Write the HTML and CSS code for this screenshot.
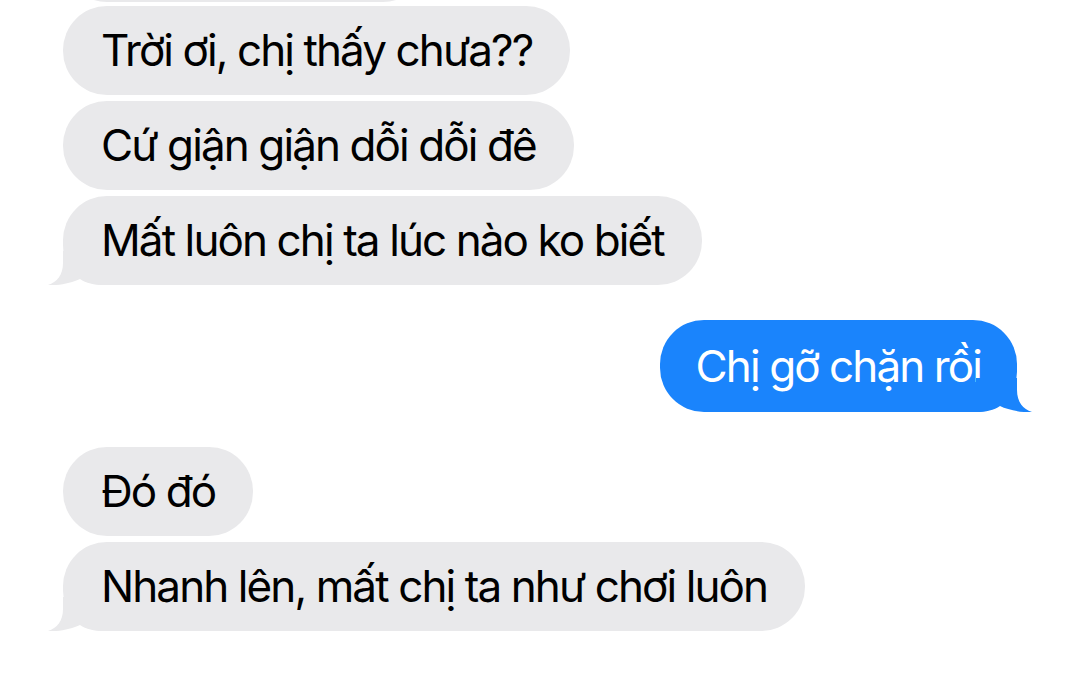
FILE: index.html
```html
<!DOCTYPE html>
<html lang="vi">
<head>
  <meta charset="UTF-8">
  <meta name="viewport" content="width=device-width, initial-scale=1.0">
  <title>Tin nhắn</title>
  <link rel="stylesheet" href="styles.css">
</head>
<body>
  <div class="thread">
    <div class="group">
      <div class="bubble them clipped"></div>
      <div class="bubble them">Trời ơi, chị thấy chưa??</div>
      <div class="bubble them">Cứ giận giận dỗi dỗi đê</div>
      <div class="bubble them has-tail">Mất luôn chị ta lúc nào ko biết
        <svg class="tail" width="56" height="34" viewBox="0 0 56 34"><path d="M15 0 V12 C15 24 9 31 0 34 C9 35 24 32 32 28 C38 32 46 34 56 34 V0 Z"/></svg>
      </div>
    </div>

    <div class="group">
      <div class="bubble me has-tail">Chị gỡ chặn rồi
        <svg class="tail" width="56" height="34" viewBox="0 0 56 34"><path d="M15 0 V12 C15 24 9 31 0 34 C9 35 24 32 32 28 C38 32 46 34 56 34 V0 Z"/></svg>
      </div>
    </div>

    <div class="group">
      <div class="bubble them">Đó đó</div>
      <div class="bubble them has-tail">Nhanh lên, mất chị ta như chơi luôn
        <svg class="tail" width="56" height="34" viewBox="0 0 56 34"><path d="M15 0 V12 C15 24 9 31 0 34 C9 35 24 32 32 28 C38 32 46 34 56 34 V0 Z"/></svg>
      </div>
    </div>
  </div>
</body>
</html>
```

FILE: styles.css
```css
:root {
  --gray-bubble: #e9e9eb;
  --blue-bubble: #1a84fc;
  --text-color: #000000;
}

html, body {
  margin: 0;
  padding: 0;
  background-color: #ffffff;
  font-family: Inter, "Noto Sans", sans-serif;
  color: var(--text-color);
  overflow: hidden;
}

.thread {
  display: flex;
  flex-direction: column;
  gap: 35px;
  padding: 0 63px;
  margin-top: -87px;
}

.group {
  display: flex;
  flex-direction: column;
  gap: 6px;
}

.bubble {
  position: relative;
  align-self: flex-start;
  box-sizing: border-box;
  min-height: 89px;
  padding: 18px 38px;
  font-size: 44px;
  line-height: 53px;
  letter-spacing: -1.9px;
  border-radius: 44px;
  background-color: var(--gray-bubble);
  white-space: nowrap;
}

.bubble.clipped {
  width: 364px;
  margin-bottom: -2px;
}

.bubble.me {
  align-self: flex-end;
  min-height: 92px;
  padding: 20px 36px 19px;
  background-color: var(--blue-bubble);
  color: #ffffff;
}

.bubble.has-tail.them {
  border-bottom-left-radius: 40px;
}

.bubble.has-tail.me {
  border-bottom-right-radius: 40px;
}

.tail {
  position: absolute;
  bottom: 0;
  left: -15px;
}

.them .tail path {
  fill: var(--gray-bubble);
}

.me .tail {
  left: auto;
  right: -15px;
  transform: scaleX(-1);
}

.me .tail path {
  fill: var(--blue-bubble);
}
```
